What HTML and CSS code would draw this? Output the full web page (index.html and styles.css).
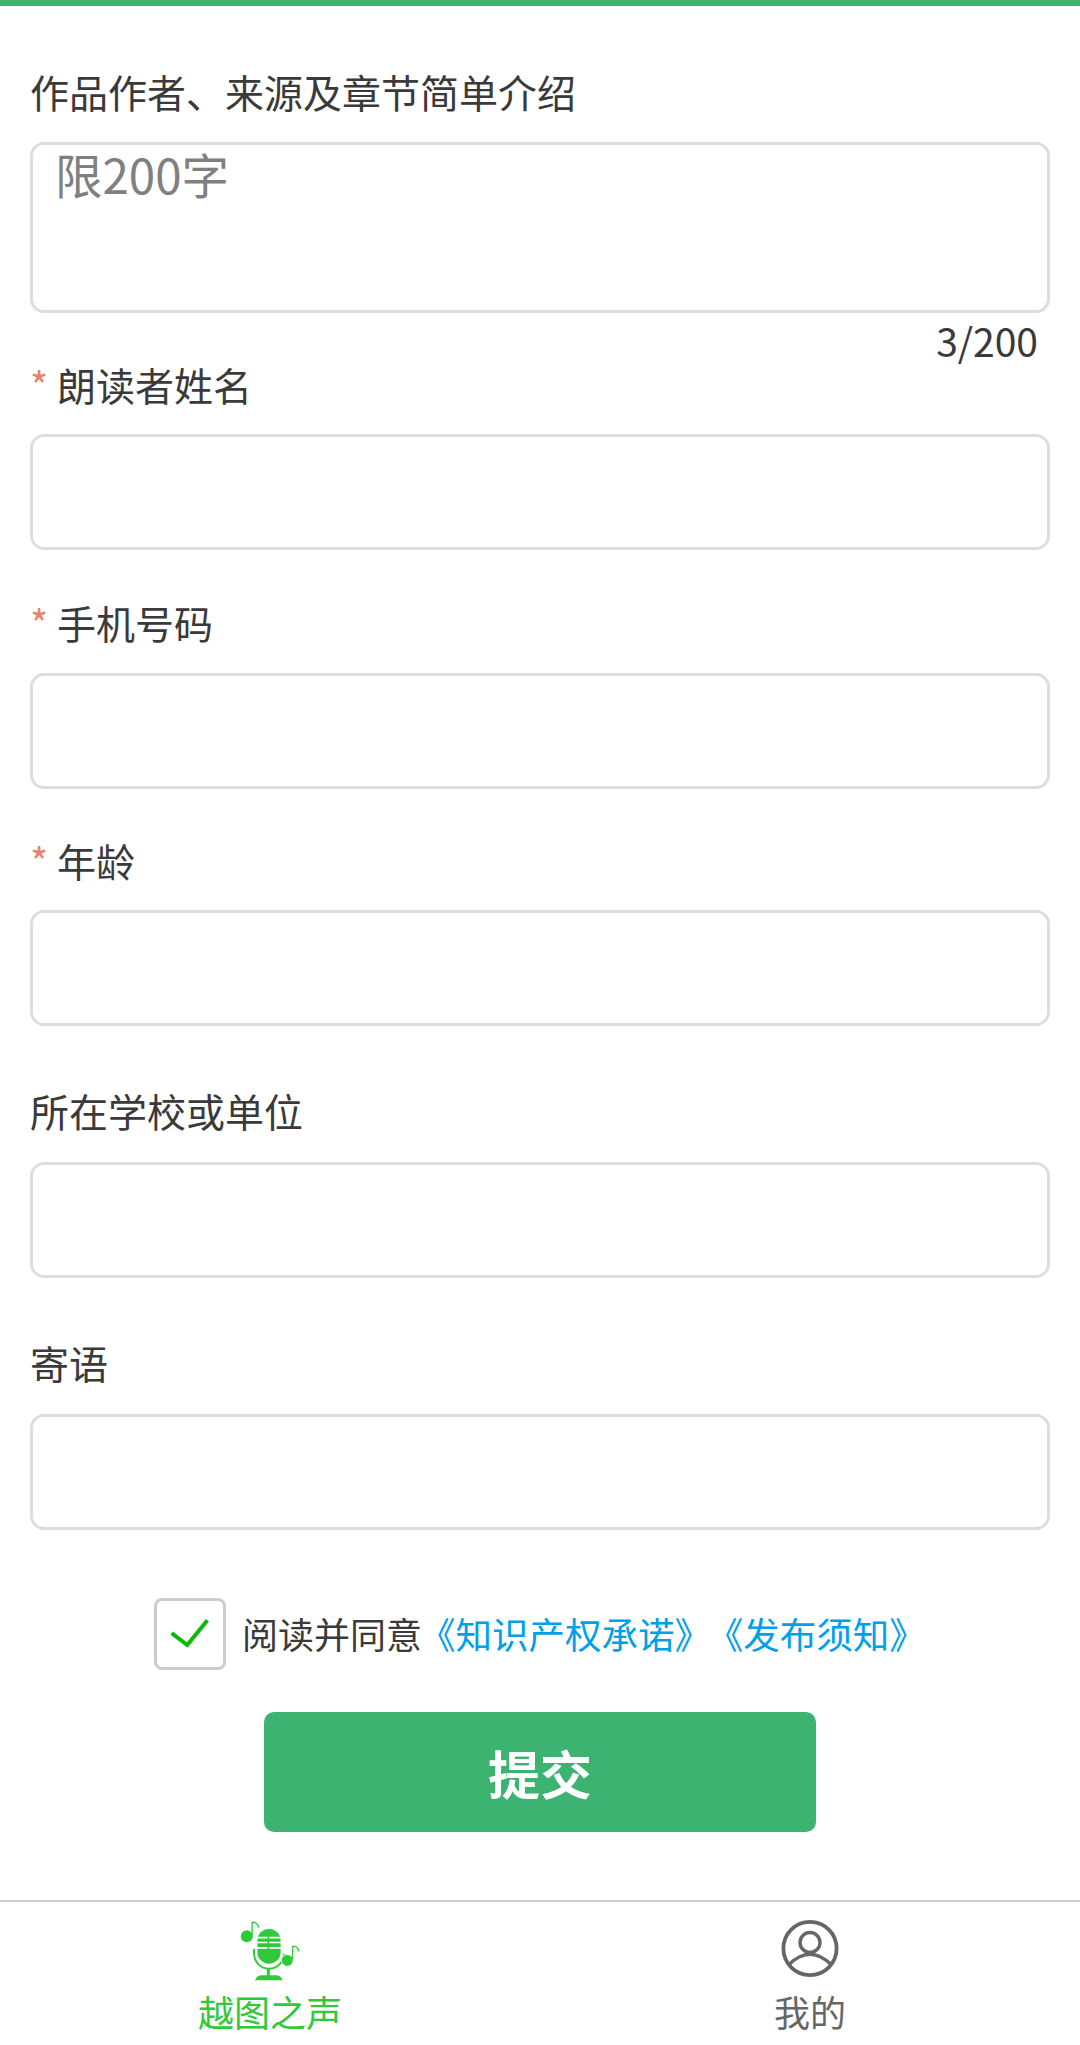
FILE: index.html
```html
<!DOCTYPE html>
<html lang="zh-CN">
<head>
    <meta charset="UTF-8">
    <meta name="viewport" content="width=device-width, initial-scale=1.0">
    <title>越图之声</title>
    <link rel="stylesheet" href="styles.css">
</head>
<body>
    <div class="top-bar"></div>

    <form class="form">
        <div class="field field-intro">
            <label class="label">作品作者、来源及章节简单介绍</label>
            <textarea class="box box-area" placeholder="限200字"></textarea>
            <div class="counter">3/200</div>
        </div>

        <div class="field field-name">
            <label class="label"><span class="star">*</span>朗读者姓名</label>
            <input class="box" type="text">
        </div>

        <div class="field field-phone">
            <label class="label"><span class="star">*</span>手机号码</label>
            <input class="box" type="text">
        </div>

        <div class="field field-age">
            <label class="label"><span class="star">*</span>年龄</label>
            <input class="box" type="text">
        </div>

        <div class="field field-school">
            <label class="label">所在学校或单位</label>
            <input class="box" type="text">
        </div>

        <div class="field field-note">
            <label class="label">寄语</label>
            <input class="box" type="text">
        </div>

        <div class="agree">
            <span class="check">
                <svg viewBox="0 0 72 72" width="66" height="66">
                    <path d="M16 35 L33 48 L55 21" fill="none" stroke="#09bb07" stroke-width="4.4"/>
                </svg>
            </span>
            <span class="agree-text">阅读并同意<a class="link link-first">《知识产权承诺》</a><a class="link link-second">《发布须知》</a></span>
        </div>

        <div class="submit-row">
            <button class="submit" type="button">提交</button>
        </div>
    </form>

    <nav class="tabbar">
        <div class="tab tab-on">
            <svg class="tab-icon" viewBox="180 100 180 190" width="60" height="63">
                <!-- microphone -->
                <path d="M232 165 A35 35 0 0 1 302 165 L302 200 A35 35 0 0 1 232 200 Z" fill="#2fc93a"/>
                <path d="M228 156 H306 M228 171 H306 M228 187 H306" stroke="#fff" stroke-width="5" fill="none"/>
                <path d="M265 150 V205" stroke="#2fc93a" stroke-width="5" fill="none"/>
                <path d="M222 190 V205 A45 45 0 0 0 312 205" stroke="#2fc93a" stroke-width="6" fill="none"/>
                <path d="M265 248 V272" stroke="#2fc93a" stroke-width="9" fill="none"/>
                <path d="M225 285 Q230 270 245 270 H288 Q303 270 308 285 Z" fill="#2fc93a"/>
                <!-- notes -->
                <circle cx="200" cy="152" r="18" fill="#2fc93a"/>
                <path d="M216 150 V110 Q232 108 236 126" stroke="#2fc93a" stroke-width="4" fill="none"/>
                <circle cx="322" cy="225" r="18" fill="#2fc93a" stroke="#fff" stroke-width="3"/>
                <path d="M338 222 V183 Q354 180 357 198" stroke="#2fc93a" stroke-width="4" fill="none"/>
            </svg>
            <span class="tab-text">越图之声</span>
        </div>
        <div class="tab">
            <svg class="tab-icon" viewBox="0 0 60 63" width="60" height="63">
                <circle cx="30" cy="29.5" r="26.6" fill="none" stroke="#666" stroke-width="3.8"/>
                <circle cx="30" cy="23.5" r="10" fill="none" stroke="#666" stroke-width="3.4"/>
                <path d="M8.5 46 Q30 24.6 51.5 46" fill="none" stroke="#666" stroke-width="3.4"/>
            </svg>
            <span class="tab-text">我的</span>
        </div>
    </nav>
</body>
</html>
```

FILE: styles.css
```css
html, body {
    margin: 0;
    padding: 0;
    background: #fff;
}

body {
    width: 1080px;
    height: 2045px;
    display: flex;
    flex-direction: column;
    font-family: "Noto Sans CJK SC", "Noto Sans", sans-serif;
    color: #3a3a3a;
    overflow: hidden;
}

.top-bar {
    height: 6px;
    background-color: #3cb371;
}

.form {
    flex: 1;
    padding: 0 30px;
}

.field {
    display: flex;
    flex-direction: column;
}

.field-intro { padding-top: 60px; }
.field-phone { margin-top: 47px; }
.field-age { margin-top: 46px; }
.field-school { margin-top: 59px; }
.field-note { margin-top: 59px; }

.label {
    display: block;
    font-size: 39px;
    line-height: 50px;
    margin-bottom: 25px;
}

.field-intro .label { margin-bottom: 26px; }
.field-phone .label { margin-bottom: 26px; }
.field-school .label { margin-bottom: 27px; }
.field-note .label { margin-bottom: 27px; }

.star {
    display: inline-block;
    vertical-align: top;
    width: 27px;
    color: #e2856a;
    font-size: 39px;
    line-height: 50px;
}

.box {
    display: block;
    width: 100%;
    height: 116px;
    box-sizing: border-box;
    border: 3px solid #ddd;
    border-radius: 14px;
    background: #fff;
    outline: none;
    margin: 0;
    font-family: inherit;
}

.box-area {
    height: 171px;
    padding: 0 22px;
    font-size: 47.5px;
    line-height: 58px;
    resize: none;
}

.box-area::placeholder {
    color: #808080;
    opacity: 1;
}

.counter {
    height: 46px;
    padding-right: 12px;
    text-align: right;
    font-size: 39px;
    line-height: 55px;
}

.agree {
    display: flex;
    align-items: center;
    gap: 16px;
    margin-top: 68px;
    padding-left: 124px;
}

.check {
    width: 72px;
    height: 72px;
    box-sizing: border-box;
    border: 3px solid #ccc;
    border-radius: 8px;
    flex-shrink: 0;
}

.check svg {
    display: block;
}

.agree-text {
    font-size: 36px;
    line-height: 50px;
    padding-bottom: 2px;
    white-space: nowrap;
}

.link {
    color: #00a0e9;
    font-size: 36.5px;
}

.link-first {
    margin-left: -3px;
}

.link-second {
    margin-left: 14px;
}

.submit-row {
    display: flex;
    justify-content: center;
    margin-top: 42px;
}

.submit {
    width: 552px;
    height: 120px;
    border: none;
    border-radius: 10px;
    background-color: #3cb371;
    color: #fff;
    font-family: inherit;
    font-size: 52px;
    font-weight: 700;
}

.tabbar {
    display: flex;
    height: 143px;
    border-top: 2px solid #ccc;
}

.tab {
    flex: 1;
    display: flex;
    flex-direction: column;
    align-items: center;
    padding-top: 17px;
    color: #666;
}

.tab-on {
    color: #2fc93a;
}

.tab-icon {
    display: block;
}

.tab-text {
    font-size: 36px;
    line-height: 46px;
    margin-top: 6px;
}
```
